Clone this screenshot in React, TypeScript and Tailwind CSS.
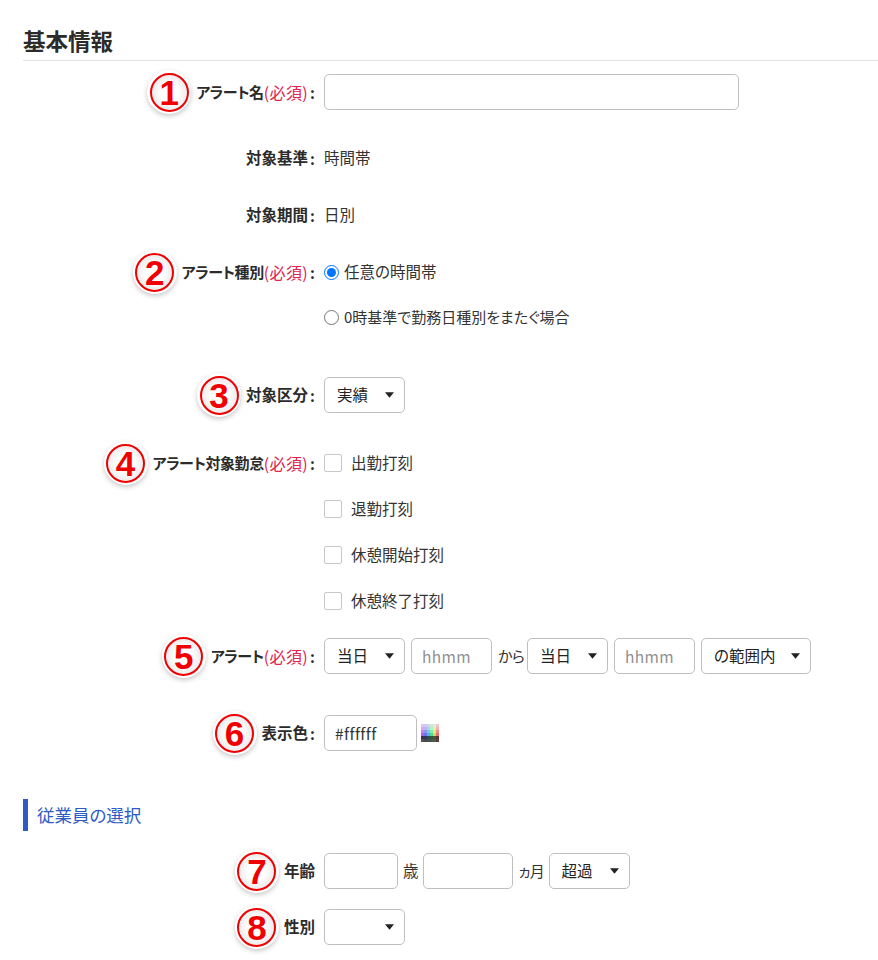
import type { ReactNode } from "react"

const font = { fontFamily: '"Noto Sans CJK JP", "Noto Sans", sans-serif' }

const palette = [
  ["#e0c8ec", "#d4c8ee", "#c8d8ee", "#cceadb", "#e8ead0", "#efc8c8"],
  ["#d8a8ee", "#bcb8f2", "#a8d4f2", "#b4f2c4", "#ececaa", "#f2b0b0"],
  ["#cc80f0", "#8c94f2", "#78c4f2", "#7cf2a8", "#e8e880", "#f28c8c"],
  ["#b060e0", "#6c78e8", "#58b0e8", "#58d890", "#d8d860", "#e87070"],
  ["#40304c", "#34345c", "#2c4c5c", "#2c5c40", "#54542c", "#5c3434"],
  ["#5a5050", "#484848", "#405050", "#485848", "#585840", "#584040"],
]

function Badge({ n }: { n: number }) {
  return (
    <span className="flex h-[44px] w-[44px] shrink-0 items-center justify-center rounded-full bg-white shadow-[0_2px_5px_rgba(0,0,0,0.22)]">
      <span className="flex h-[39px] w-[39px] items-center justify-center rounded-full border-2 border-[#f00000] bg-[radial-gradient(circle,#ffffff_35%,#dcdcdc_100%)] font-['Liberation_Sans'] text-[35px] leading-none font-bold text-[#f00000]">
        {n}
      </span>
    </span>
  )
}

function Row({
  label,
  badge,
  required,
  colon = true,
  kana,
  className,
  children,
}: {
  label?: string
  badge?: number
  required?: boolean
  colon?: boolean
  kana?: boolean
  className: string
  children: ReactNode
}) {
  return (
    <div className={`flex h-[36px] items-center ${className}`}>
      <div className="flex w-[315px] shrink-0 items-center justify-end leading-none font-bold whitespace-nowrap text-[#2b2b2b]">
        {badge && <span className="mr-[5px]"><Badge n={badge} /></span>}
        {label && <span className={kana ? "-translate-y-px text-[15px] tracking-[-0.45px]" : "text-[15.5px]"}>{label}</span>}
        {required && <span className="text-[16px] font-normal tracking-[0.4px] text-[#e0244f]">(必須)</span>}
        {label && colon && <span className="ml-[2px] text-[15px]">:</span>}
      </div>
      <div className="ml-[9px] flex items-center text-[15.5px] whitespace-nowrap text-[#333333]">{children}</div>
    </div>
  )
}

function Select({ value, width = "w-[81px]" }: { value: string; width?: string }) {
  return (
    <div className={`relative h-[36px] ${width}`}>
      <select
        defaultValue={value}
        className="h-full w-full appearance-none rounded-[5px] border border-[#bfbfbf] bg-white pl-[12px] text-[15.5px] text-[#222222]"
      >
        <option value={value}>{value}</option>
      </select>
      <svg viewBox="0 0 10 6" className="pointer-events-none absolute top-[15px] right-[11px] h-[6px] w-[9px]">
        <path d="M0 0h10L5 6z" fill="#222222" />
      </svg>
    </div>
  )
}

function TextInput({ width, placeholder, value }: { width: string; placeholder?: string; value?: string }) {
  return (
    <input
      type="text"
      placeholder={placeholder}
      defaultValue={value}
      className={`h-[36px] ${width} rounded-[5px] border border-[#bfbfbf] bg-white px-[10px] text-[15.5px] tracking-[0.4px] text-[#333333] placeholder:text-[#8f8f8f]`}
    />
  )
}

function Check({ label }: { label: string }) {
  return (
    <label className="flex items-center">
      <span className="h-[18px] w-[18px] rounded-[2px] border border-[#c8c8c8] bg-white" />
      <span className="ml-[9px]">{label}</span>
    </label>
  )
}

export default function App() {
  return (
    <div style={font} className="h-[960px] w-[878px] overflow-hidden bg-white [font-feature-settings:'palt']">
      <div className="ml-[23px] flex h-[61px] items-end border-b border-[#e2e2e2] pb-[5px]">
        <h2 className="text-[22.5px] leading-[30px] font-bold text-[#2b2b2b]">基本情報</h2>
      </div>

      <Row className="mt-[13px]" badge={1} label="アラート名" required kana>
        <TextInput width="w-[415px]" />
      </Row>
      <Row className="mt-[30px]" label="対象基準">時間帯</Row>
      <Row className="mt-[21px]" label="対象期間">日別</Row>
      <Row className="mt-[21px]" badge={2} label="アラート種別" required kana>
        <input type="radio" name="kind" defaultChecked className="m-0 h-[15px] w-[15px]" />
        <span className="ml-[5px]">任意の時間帯</span>
      </Row>
      <Row className="mt-[9px]">
        <input type="radio" name="kind" className="m-0 h-[15px] w-[15px]" />
        <span className="ml-[5px] text-[15px]">0時基準で勤務日種別をまたぐ場合</span>
      </Row>
      <Row className="mt-[42px]" badge={3} label="対象区分">
        <Select value="実績" />
      </Row>
      <Row className="mt-[32px]" badge={4} label="アラート対象勤怠" required kana>
        <Check label="出勤打刻" />
      </Row>
      <Row className="mt-[10px]"><Check label="退勤打刻" /></Row>
      <Row className="mt-[10px]"><Check label="休憩開始打刻" /></Row>
      <Row className="mt-[10px]"><Check label="休憩終了打刻" /></Row>
      <Row className="mt-[19px]" badge={5} label="アラート" required kana>
        <div className="flex items-center gap-[6px]">
          <Select value="当日" />
          <TextInput width="w-[81px]" placeholder="hhmm" />
          <span className="w-[23px] text-[15px] tracking-[-0.6px]">から</span>
          <Select value="当日" />
          <TextInput width="w-[81px]" placeholder="hhmm" />
          <Select value="の範囲内" width="w-[110px]" />
        </div>
      </Row>
      <Row className="mt-[41px]" badge={6} label="表示色">
        <TextInput width="w-[93px]" value="#ffffff" />
        <svg viewBox="0 0 18 18" className="ml-[4px] h-[18px] w-[18px]">
          {palette.map((cols, y) =>
            cols.map((c, x) => <rect key={`${x}-${y}`} x={x * 3} y={y * 3} width="3" height="3" fill={c} />),
          )}
        </svg>
      </Row>

      <div className="mt-[48px] ml-[23px] flex h-[32px] items-center border-l-[5px] border-[#2f5bc4] pl-[9px] text-[17.5px] text-[#2f5bc4]">
        従業員の選択
      </div>

      <Row className="mt-[22px]" badge={7} label="年齢" colon={false}>
        <TextInput width="w-[74px]" />
        <span className="mr-[4px] ml-[5px]">歳</span>
        <TextInput width="w-[90px]" />
        <span className="mx-[6px] w-[24px] text-[15px] tracking-[-1px]">ヵ月</span>
        <Select value="超過" />
      </Row>
      <Row className="mt-[20px]" badge={8} label="性別" colon={false}>
        <Select value="" />
      </Row>
    </div>
  )
}
